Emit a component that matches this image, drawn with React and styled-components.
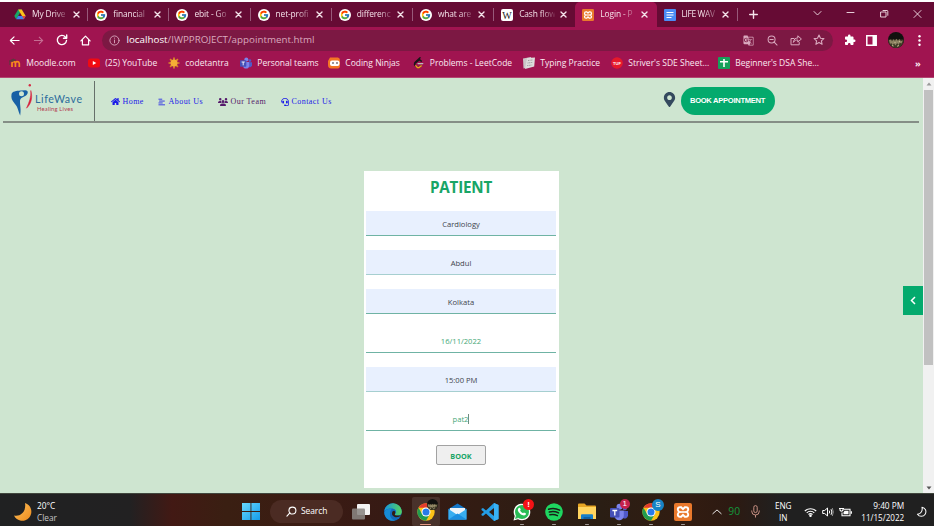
import React from "react";
import styled, { createGlobalStyle, css } from "styled-components";
import { FaHome, FaHeadset, FaMapMarkerAlt } from "react-icons/fa";
import { FaUsers } from "react-icons/fa6";
import { FcGoogle } from "react-icons/fc";
import { MdGTranslate, MdExtension } from "react-icons/md";

const ui = `"Open Sans", "Noto Sans", sans-serif`;

const Global = createGlobalStyle`
  * { box-sizing: border-box; }
  html, body { margin: 0; padding: 0; background: #fff; overflow: hidden; }
  svg { display: block; flex: none; }
`;

const Screen = styled.div`
  width: 934px;
  height: 526px;
  padding-top: 2px;
  display: flex;
  flex-direction: column;
  font-family: ${ui};
  overflow: hidden;
`;

const Text = styled.span`
  font-size: ${(p) => p.$size || 9}px;
  letter-spacing: ${(p) => p.$ls || 0}px;
  white-space: nowrap;
  line-height: 1.2;
`;

/* ---------- browser chrome ---------- */
const TabStrip = styled.div`
  height: 25px;
  flex: none;
  background: #660b34;
  display: flex;
  padding-left: 7px;
  color: #f5e3ea;
`;
const Tab = styled.div`
  width: 81.2px;
  height: 25px;
  padding: 0 0 0 7px;
  display: flex;
  align-items: center;
  position: relative;
  flex: none;
  ${(p) => p.$active && css`background: #a01450; border-radius: 5px 5px 0 0;`}
  &::after {
    content: "";
    position: absolute;
    right: 0;
    top: 6px;
    width: 1px;
    height: 13px;
    background: ${(p) => (p.$line ? "#98597a" : "transparent")};
  }
`;
const TabTitle = styled.div`
  width: 36px;
  margin-left: 6px;
  display: flex;
  mask-image: linear-gradient(90deg, #000 60%, rgba(0, 0, 0, 0.1) 100%);
`;
const TabClose = styled.div`
  margin-left: 4.5px;
`;
const StripControls = styled.div`
  flex: 1;
  display: grid;
  grid-template-columns: 32px 31px 33px 34px 33px 34px;
  align-items: center;
  justify-items: center;
`;
const Toolbar = styled.div`
  height: 26px;
  flex: none;
  background: #a01450;
  display: flex;
  align-items: center;
  color: #fff;
`;
const ToolSlot = styled.div`
  width: ${(p) => p.$w}px;
  display: flex;
  justify-content: center;
  flex: none;
`;
const Address = styled.div`
  width: 731px;
  height: 21px;
  margin-left: 8px;
  border-radius: 11px;
  background: #7c1843;
  display: flex;
  align-items: center;
  padding-left: 7px;
  color: #d9a9be;
  & b { font-weight: 400; color: #fff; }
`;
const Url = styled(Text)`
  width: 610.5px;
  margin-left: 6.5px;
`;
const Bookmarks = styled.div`
  height: 24.5px;
  flex: none;
  background: #a01450;
  border-bottom: 1px solid #b44672;
  padding: 0 0 3px 9px;
  display: flex;
  color: #fbe9f0;
`;
const Bookmark = styled.div`
  width: ${(p) => p.$w}px;
  display: flex;
  align-items: center;
  gap: 5.3px;
  flex: none;
`;

/* ---------- page ---------- */
const Viewport = styled.div`
  height: 415.5px;
  flex: none;
  display: flex;
  background: #cee5d0;
`;
const Page = styled.main`
  width: 923px;
  position: relative;
`;
const Header = styled.header`
  height: 45.5px;
  margin: 0 4px 0 3px;
  border-bottom: 2px solid #858e86;
  display: flex;
  align-items: center;
`;
const Brand = styled.div`
  width: 92px;
  height: 40px;
  border-right: 1.5px solid #66706a;
  padding-left: 7px;
  display: flex;
  align-items: center;
  align-self: flex-end;
`;
const BrandWords = styled.div`
  display: flex;
  flex-direction: column;
  gap: 1px;
  margin: 4px 0 0 2px;
  font-family: Lato, sans-serif;
  color: #2c6c9c;
  & em { font-style: normal; color: #b43c50; margin-left: 2px; }
`;
const Nav = styled.nav`
  width: 567px;
  display: flex;
  padding: 5px 0 0 15.5px;
`;
const NavLink = styled.a`
  width: ${(p) => p.$w}px;
  display: flex;
  align-items: center;
  gap: 3px;
  color: ${(p) => (p.$visited ? "#551a6b" : "#1a1ae8")};
  font-family: "Liberation Serif", serif;
`;
const BookNow = styled.button`
  width: 94px;
  height: 27.5px;
  margin: 3px 0 0 3.5px;
  border: 0;
  padding: 0;
  border-radius: 14px;
  background: #04aa6d;
  color: #fff;
  font: bold 7.6px "Liberation Sans", Arial, sans-serif;
  letter-spacing: -0.3px;
  white-space: nowrap;
`;
const Card = styled.form`
  width: 195.5px;
  height: 317px;
  margin: 47.5px 0 0 363.5px;
  padding: 0 3px 0 2.5px;
  background: #fff;
  display: flex;
  flex-direction: column;
  align-items: center;
`;
const Title = styled.h1`
  height: 40.5px;
  margin: 0;
  padding-top: 5px;
  font-size: 15.2px;
  line-height: 22px;
  letter-spacing: -0.2px;
  color: #18a566;
`;
const Field = styled.div`
  width: 100%;
  height: 25px;
  margin-bottom: 14px;
  padding-top: 2.5px;
  flex: none;
  display: flex;
  align-items: center;
  justify-content: center;
  background: ${(p) => (p.$filled ? "#e8f0fe" : "#fff")};
  color: ${(p) => (p.$filled ? "#41454c" : "#46a777")};
  border-bottom: 1px solid ${(p) => (p.$soft ? "#a6cfd0" : "#6fb3a4")};
`;
const Caret = styled.i`
  width: 1px;
  height: 10px;
  background: #6f8f80;
`;
const Submit = styled.button`
  width: 50px;
  height: 20px;
  border: 1px solid #a2a2a2;
  border-radius: 2px;
  background: #efefef;
  color: #18a566;
  font: bold 7.3px ${ui};
  padding: 1px 0 0;
`;
const Drawer = styled.div`
  position: absolute;
  right: 0;
  top: 208.5px;
  width: 20px;
  height: 29px;
  background: #04aa6d;
  display: grid;
  place-items: center;
`;
const Scrollbar = styled.div`
  width: 11px;
  background: #f1f1f1;
  display: flex;
  flex-direction: column;
  align-items: center;
  justify-content: space-between;
  padding: 4px 0 3px;
`;
const Thumb = styled.div`
  width: 9px;
  height: 275px;
  background: #c1c1c1;
  margin: 4.5px 0 auto;
`;

/* ---------- taskbar ---------- */
const Taskbar = styled.footer`
  height: 33px;
  flex: none;
  border-top: 1px solid #40463d;
  display: flex;
  align-items: center;
  padding-top: 3px;
  color: #fff;
  background: linear-gradient(90deg, #202122 0, #222122 130px, #421914 172px, #3a1f12 225px, #3b1c13 300px, #381a14 360px, #321c13 480px, #2a1e14 600px, #321c11 690px, #2c1a12 735px, #202020 780px, #202020 100%);
`;
const Weather = styled.div`
  width: 235px;
  padding-left: 13px;
  display: flex;
  align-items: center;
  gap: 5px;
`;
const Stack = styled.div`
  display: flex;
  flex-direction: column;
  align-items: ${(p) => p.$align || "flex-start"};
  gap: 2px;
  flex: none;
`;
const Muted = styled(Text)`
  color: #c6c6c6;
`;
const Battery = styled(Text)`
  color: #14973c;
`;
const Search = styled.div`
  width: 73px;
  height: 23px;
  margin: 0 2px 0 3px;
  border-radius: 12px;
  background: #4b2b23;
  display: flex;
  align-items: center;
  justify-content: center;
  gap: 4px;
`;
const TaskIcon = styled.div`
  width: 32.2px;
  height: 29px;
  flex: none;
  display: flex;
  align-items: center;
  justify-content: center;
  position: relative;
  &::before {
    content: "";
    position: absolute;
    z-index: 0;
    inset: 0 2px;
    border-radius: 2px;
    background: ${(p) => (p.$active ? "rgba(255,255,255,.1)" : "transparent")};
  }
  &::after {
    content: "";
    position: absolute;
    bottom: 1px;
    width: ${(p) => (p.$active ? 11 : 4)}px;
    height: 1.5px;
    border-radius: 1px;
    background: ${(p) => (p.$active ? "#e59a86" : p.$open ? "#a29b98" : "transparent")};
  }
  & > svg { position: relative; }
`;
const Badge = styled.span`
  position: absolute;
  left: 17px;
  top: 2px;
  width: ${(p) => p.$d || 11}px;
  height: ${(p) => p.$d || 11}px;
  border-radius: 50%;
  background: ${(p) => p.$c};
  color: #fff;
  font: ${(p) => (p.$bold ? "bold" : "normal")} 8px/1 "Liberation Sans", sans-serif;
  display: grid;
  place-items: center;
`;
const Tray = styled.div`
  flex: 1;
  margin-left: 12px;
  display: grid;
  grid-template-columns: 12px 22px 20px 36px 19px 15px 21px 53px 1fr;
  align-items: center;
  justify-items: center;
`;

/* ---------- drawings ---------- */
const Line = ({ d, s = 12, w = 1.2, vb = 12, children }) => (
  <svg width={s} height={s} viewBox={`0 0 ${vb} ${vb}`} fill="none" stroke="currentColor" strokeWidth={w} strokeLinecap="round" strokeLinejoin="round">
    <path d={d} />{children}
  </svg>
);
const Close = () => <Line s={7} vb={7} w={1.4} d="M1 1 6 6M6 1 1 6" />;
const Google = () => (
  <svg width="12" height="12" viewBox="0 0 12 12"><circle cx="6" cy="6" r="6" fill="#fff" /><g transform="translate(1 1)"><FcGoogle size={10} /></g></svg>
);
const Drive = () => (
  <svg width="12" height="11" viewBox="0 0 12 11"><path d="M4.2.5h3.6L4 7.2 2.2 10.3.3 7z" fill="#16a765" /><path d="M4.2.5h3.6L11.7 7H8z" fill="#fbc31a" /><path d="M4.1 7h7.6l-1.9 3.3H2.2z" fill="#3d82ee" /><path d="m8.1 7 1.7 3.3L11.7 7z" fill="#e94435" /></svg>
);
const Wiki = () => (
  <svg width="12" height="12" viewBox="0 0 12 12"><rect width="12" height="12" rx="2" fill="#fff" /><text x="6" y="9.5" textAnchor="middle" fontFamily="Liberation Serif" fontSize="10" fill="#222">W</text></svg>
);
const Xampp = ({ s = 12 }) => (
  <svg width={s} height={s} viewBox="0 0 18 18"><rect width="18" height="18" rx="2" fill="#e9792c" /><path d="M6 4.3h1.2L9 6.2l1.8-1.9H12q2.2 0 2.2 2.3Q14.2 8 12.6 9q1.6 1 1.6 2.5 0 2.2-2.2 2.2h-1.2L9 11.8l-1.8 1.9H6q-2.2 0-2.2-2.2Q3.8 10 5.4 9 3.8 8 3.8 6.6 3.8 4.3 6 4.3z" fill="none" stroke="#fff" strokeWidth="1.9" /><path d="M6 9h6" stroke="#fff" strokeWidth="1.6" /></svg>
);
const Docs = () => (
  <svg width="12" height="12" viewBox="0 0 12 12"><rect width="12" height="12" rx="1" fill="#4b8cf5" /><path d="M2.5 3.5h7M2.5 6h7M2.5 8.5h5" stroke="#fff" strokeWidth="1.2" /></svg>
);
const Moodle = () => (
  <svg width="12" height="12" viewBox="0 0 12 12" fill="none"><path d="M3 10V6.4q0-1.7 1.7-1.7T6.4 6.4V10M6.4 6.4q0-1.7 1.8-1.7T10.3 6.4V10" stroke="#f78a1d" strokeWidth="1.7" /><path d="m.3 4 4-2 2.4 1-3 1.4zM.7 4v4" stroke="#5d3a3c" strokeWidth=".8" fill="#5d3a3c" /></svg>
);
const Youtube = () => (
  <svg width="12" height="10" viewBox="0 0 12 10"><rect y=".5" width="12" height="9" rx="2.5" fill="#f00a12" /><path d="m4.8 3 3.5 2-3.5 2z" fill="#fff" /></svg>
);
const Sun = () => (
  <svg width="12" height="12" viewBox="0 0 12 12"><path d="M6 .5v11M.5 6h11M2.1 2.1l7.8 7.8M9.9 2.1 2.1 9.9" stroke="#d98a25" strokeWidth="1.7" /><circle cx="6" cy="6" r="3.5" fill="#f5ae35" /></svg>
);
const Teams = ({ s = 12 }) => (
  <svg width={s} height={s} viewBox="0 0 18 18"><circle cx="14.8" cy="5.4" r="2" fill="#5059c9" /><path d="M11.5 8H18v4.5a3.2 3.2 0 0 1-5 2.4z" fill="#5059c9" /><circle cx="9.5" cy="3.7" r="3" fill="#7b83eb" /><path d="M4.5 7.5h9.3v5.2a4.6 4.6 0 0 1-9.3 0z" fill="#7b83eb" /><rect y="5" width="9.5" height="9.5" rx="1" fill="#4550b8" /><path d="M2.4 7.5h4.8M4.8 7.5V12.5" stroke="#fff" strokeWidth="1.3" /></svg>
);
const Ninja = () => (
  <svg width="12" height="12" viewBox="0 0 12 12"><path d="M2 .5h8Q12 1 12 3.2v5.5q0 2.8-3 2.8H3Q0 11.3 0 8V4z" fill="#f37524" /><rect x="2" y="3.5" width="9.5" height="5.5" rx="2" fill="#fff" /><path d="M4 6h2M8 6h2" stroke="#402b32" /></svg>
);
const Leet = () => (
  <svg width="12" height="12" viewBox="0 0 12 12" fill="none" strokeLinecap="round" strokeWidth="1.5"><path d="M7 .8 2 5.5" stroke="#171717" /><path d="M8.3 4.1 6.5 2.7 2 6.2q-1 1 0 2l2 2.2q1 1 2.1 0l2-1.5" stroke="#171717" /><path d="m2.8 8.8 1.4 1.6q1 .8 2 0l2-1.5" stroke="#f39b21" /><path d="M5 6.6h4.8" stroke="#bbb" strokeWidth="1.2" /></svg>
);
const Typing = () => (
  <svg width="12" height="12" viewBox="0 0 12 12"><path d="M0 1.5 8 0l.5 9.5L.5 11.5z" fill="#c9c6c6" /><path d="m4 1 8-.6-.8 9.1L2 12z" fill="#dedcdc" /><path d="m5 3.5 5-.6M4.6 6l5-.6M4.2 8.6l5-.6" stroke="#999" strokeWidth="1" strokeDasharray="1 .6" /></svg>
);
const Tuf = () => (
  <svg width="12" height="12" viewBox="0 0 12 12"><circle cx="6" cy="6" r="5.8" fill="#e6192a" /><text x="6" y="7.5" textAnchor="middle" fontFamily="Liberation Sans" fontSize="4" fontWeight="bold" fill="#fff">TUF</text></svg>
);
const Sheets = () => (
  <svg width="12" height="12" viewBox="0 0 12 12"><rect width="12" height="12" rx="1" fill="#16a05b" /><path d="M6 2v8M2 4.8h8" stroke="#fff" strokeWidth="1.6" /></svg>
);
const Avatar = ({ s = 16 }) => (
  <svg width={s} height={s} viewBox="0 0 16 16"><circle cx="8" cy="8" r="8" fill="#11110e" /><path d="M.4 7.5h15.2Q16 12 12 15q-4 2-8 0Q0 12 .4 7.5z" fill="#3e3a26" /><path d="m1 8.2 2-.6 1 2 1.4-2.4L7 9l1.3-2.2L10 9l1.4-2 1.4 2.3 2-.8-1.3 3-1.8-.8-1 2.4-1.6-2-1.5 2.4L6 11.4l-1.5 1.8-.8-2-1.7.5z" fill="#8d8362" /><path d="m4 13.5 1.6.5M9 14.3l2-.8M6.5 10.5h1M11 9.6h1" stroke="#c9bd92" /></svg>
);
const Logo = () => (
  <svg width="23" height="36" viewBox="0 0 23 36"><path d="M1.5 11.5C2 8 6.5 8 10.5 7.5l5-.3c3 .2 3 3.5.2 5.5-2.5 1.8-5.6 1.8-5.7 5.3-.1 5 1.3 8 .2 14.5C8 28 8.2 24.3 4.6 20.5 1.7 17.2 1 14.5 1.5 11.5z" fill="#1760a5" /><circle cx="11.5" cy="10.8" r="2.5" fill="#cee5d0" /><path d="M20.8 7.5c1.9 7 .8 13-4.3 17.7 2.6-6 4.8-10.7 4.3-17.7z" fill="#d61f3b" stroke="#d61f3b" strokeWidth=".5" /><circle cx="19.8" cy="2.2" r="1.2" fill="#d52b43" /></svg>
);
const Lines = () => (
  <svg width="7.5" height="8" viewBox="0 0 8 8" fill="none" stroke="currentColor" strokeWidth="1" opacity=".85"><path d="M.5 1h4M1.2 3h6M.5 5h4.5M.5 7h7" /></svg>
);
const Chrome = () => (
  <svg width="18" height="18" viewBox="0 0 18 18"><circle cx="9" cy="9" r="8.7" fill="#fbc116" /><path d="M1.47 4.65A8.7 8.7 0 0 1 16.53 4.65H9z" fill="#e33b2e" /><path d="M1.47 4.65A8.7 8.7 0 0 0 9 17.7l3.8-6.5L9 9 5.2 11.2z" fill="#219c50" /><circle cx="9" cy="9" r="4.5" fill="#fff" /><circle cx="9" cy="9" r="3.5" fill="#287be8" /></svg>
);
const Edge = () => (
  <svg width="18" height="18" viewBox="0 0 18 18"><defs><linearGradient id="eg"><stop stopColor="#1696dc" /><stop offset="1" stopColor="#55d45e" /></linearGradient></defs><circle cx="9" cy="9" r="8.8" fill="#1269bb" /><path d="M.3 8A8.8 8.8 0 0 1 17.8 8.5c0 3-2.1 4-4.3 4-2 0-3.2-.7-2.2-1.7 2-2.5-.3-5.1-3-5.3C4.7 5.2 1.5 6.7.3 8z" fill="url(#eg)" /><path d="M8 10.2c.2-1.6 1-2.4 2.2-2.4 1.4 1 1.2 2.4.7 3.1-.6.9.7 1.7 3 1.7 1 0 2.5-.2 3.4-.7C15.7 13.6 13 14.7 10.8 13.9 9 13.3 7.8 11.8 8 10.2z" fill="#321c13" /><path d="M6 10.5c-.4 3.5 2.3 6.6 5.6 7-6 1.6-11.3-2.5-11.3-8C1 6.5 5 5.3 8.3 5.5 6.8 6.8 6.1 8.5 6 10.5z" fill="#178bd5" /></svg>
);
const Windows = () => (
  <svg width="18" height="17" viewBox="0 0 18 17"><defs><linearGradient id="wg" x2="1" y2="1"><stop stopColor="#68d8fc" /><stop offset="1" stopColor="#149be9" /></linearGradient></defs><path d="M0 0h8.5v8H0zM9.4 0H18v8H9.4zM0 9h8.5v8H0zM9.4 9H18v8H9.4z" fill="url(#wg)" /></svg>
);
const TaskView = () => (
  <svg width="18" height="17" viewBox="0 0 18 17"><rect x="5" y="1" width="13" height="11" rx="1" fill="#f4f3f3" /><rect x="0" y="5.5" width="13" height="11" rx="1" fill="#8a8582" fillOpacity=".88" /></svg>
);
const Mail = () => (
  <svg width="19" height="17" viewBox="0 0 19 17"><path d="M.5 6 9.5.5l9 5.5v10.5H.5z" fill="#1677c8" /><path d="M2 5h15v7H2z" fill="#eef4fa" /><path d="m.5 6 9 6 9-6v10.5H.5z" fill="#38aef1" /><path d="m.5 16.5 9-6 9 6z" fill="#1b8fe1" /></svg>
);
const Code = () => (
  <svg width="18" height="18" viewBox="0 0 18 18"><path d="m13 0 4.5 2v14L13 18 5 10.5 2 13l-1.5-.8V11L3 9 .5 7V5.8L2 5l3 2.5zM13 5 8 9l5 4z" fill="#249ee6" fillRule="evenodd" /><path d="m13 0 4.5 2v14L13 18z" fill="#39b1f4" /></svg>
);
const WhatsApp = () => (
  <svg width="18" height="18" viewBox="0 0 18 18"><path d="M.5 17.5 1.7 13A8.3 8.3 0 1 1 5 16.3z" fill="#fff" /><circle cx="9" cy="9" r="7" fill="#29bd56" /><path d="m2 16 1-3.4 2.5 2.5z" fill="#29bd56" /><path d="M5.8 5.1c.6-.6 1.2-.5 1.5.3l.5 1.1-.7 1c.8 1.5 1.8 2.3 3 2.8l.8-.9 1.8.9c.5.2.2 1.2-.4 1.7-.8.7-1.9.6-3.3 0-2-.8-3.5-2.8-4-4.2-.4-1.1 0-2 .8-2.7z" fill="#fff" /></svg>
);
const Spotify = () => (
  <svg width="18" height="18" viewBox="0 0 18 18"><circle cx="9" cy="9" r="8.8" fill="#1ed760" /><path d="M3.6 6.2c4-1.1 7.8-.7 11 1M4.3 9c3.4-.9 6.5-.5 9.2.9M4.9 11.8c2.8-.7 5.3-.3 7.5.8" fill="none" stroke="#182018" strokeWidth="1.5" strokeLinecap="round" /></svg>
);
const Explorer = () => (
  <svg width="18" height="17" viewBox="0 0 18 17"><path d="M0 1.5Q0 .5 1 .5h5.5l2 2H17q1 0 1 1v12H0z" fill="#e7a624" /><path d="M0 4h18v12H0z" fill="#ffd55f" /><path d="M3 16v-3.7q0-1 1-1h10q1 0 1 1V16z" fill="#167fc9" /><path d="M5.5 16v-2h7v2z" fill="#0e60a2" /></svg>
);
const Arrow = ({ down }) => (
  <svg width="6" height="4" viewBox="0 0 6 4"><path d={down ? "M.5.5h5L3 3.5z" : "M.5 3.5h5L3 .5z"} fill={down ? "#555" : "#999"} /></svg>
);

const tabs = [
  [<Drive />, "My Drive"], [<Google />, "financial"], [<Google />, "ebit - Go"], [<Google />, "net-profi"],
  [<Google />, "differenc"], [<Google />, "what are"], [<Wiki />, "Cash flow"], [<Xampp />, "Login - P"], [<Docs />, "LIFE WAV", -0.35],
];
const marks = [
  [<Moodle />, "Moodle.com", 79], [<Youtube />, "(25) YouTube", 80], [<Sun />, "codetantra", 72],
  [<Teams />, "Personal teams", 88], [<Ninja />, "Coding Ninjas", 84.5], [<Leet />, "Problems - LeetCode", 110.5],
  [<Typing />, "Typing Practice", 88], [<Tuf />, "Striver's SDE Sheet...", 107], [<Sheets />, "Beginner's DSA She...", 197],
];
const fields = [
  ["Cardiology", true], ["Abdul", true, true], ["Kolkata", true], ["16/11/2022"], ["15:00 PM", true, true], ["pat2"],
];

export default function App() {
  return (
    <Screen>
      <Global />
      <TabStrip>
        {tabs.map(([icon, title, spacing = -0.12], i) => (
          <Tab key={title} $active={i === 7} $line={i < 6 || i === 8}>
            {icon}
            <TabTitle><Text $size={8.4} $ls={spacing}>{title}</Text></TabTitle>
            <TabClose><Close /></TabClose>
          </Tab>
        ))}
        <StripControls>
          <Line s={9} vb={9} w={1.4} d="M4.5.7v7.6M.7 4.5h7.6" />
          <span />
          <Line s={9} vb={9} w={0.9} d="M1 1.5 4.5 5 8 1.5" />
          <Line s={9} vb={9} w={0.9} d="M1 2.5h7" />
          <Line s={9} vb={9} w={0.9} d="M1 2h5v5H1zM3 .5h4q.8 0 .8.8v4" />
          <Line s={9} vb={9} w={0.9} d="m1 .5 7 7M8 .5l-7 7" />
        </StripControls>
      </TabStrip>

      <Toolbar>
        <ToolSlot $w={29}><Line s={11} w={1.3} d="M11 6H1.5M5.5 2 1.5 6l4 4" /></ToolSlot>
        <ToolSlot $w={18}><svg width="11" height="11" viewBox="0 0 12 12" fill="none" stroke="#c56d92" strokeWidth="1.2"><path d="M1 6h9.5M6.5 2l4 4-4 4" /></svg></ToolSlot>
        <ToolSlot $w={29}><Line s={12} w={1.4} d="M10.5 6.5A4.6 4.6 0 1 1 9.4 3L10.6 4.2M10.7 1v3.3H7.5" /></ToolSlot>
        <ToolSlot $w={18}><Line s={11} w={1.3} d="M1 6.5 6 1.3l5 5.2M2.6 5.2v5.5h6.8V5.2" /></ToolSlot>
        <Address>
          <Line s={11} w={1} d="M6 5.5v3M6 3.3v.2"><circle cx="6" cy="6" r="5" /></Line>
          <Url $size={9.8}><b>localhost</b>/IWPPROJECT/appointment.html</Url>
          <ToolSlot $w={23}><MdGTranslate size={11} /></ToolSlot>
          <ToolSlot $w={24}><Line s={11} w={1.1} d="M7.6 7.6 11 11M3.2 5h3.6"><circle cx="5" cy="5" r="3.8" /></Line></ToolSlot>
          <ToolSlot $w={23}><Line s={12} w={1} d="M4 4.5H1v6.3h8.2V8.5M3.5 8c.3-3 2-4 4.3-4V1.8L11.4 5 7.8 8V6C6 6 4.5 6.3 3.5 8z" /></ToolSlot>
          <ToolSlot $w={24}><Line s={12} w={1.1} d="m6 1.1 1.5 3.1 3.4.4-2.5 2.3.7 3.4L6 8.6l-3.1 1.7.7-3.4-2.5-2.3 3.4-.4z" /></ToolSlot>
        </Address>
        <ToolSlot $w={33}><MdExtension size={12} /></ToolSlot>
        <ToolSlot $w={11}><svg width="11" height="11" viewBox="0 0 11 11"><path d="M.8.8h9.4v9.4H.8z" fill="none" stroke="#fff" strokeWidth="1.5" /><path d="M6.5 1H10v9H6.5z" fill="#fff" /></svg></ToolSlot>
        <ToolSlot $w={37}><Avatar /></ToolSlot>
        <ToolSlot $w={10}><svg width="3" height="11" viewBox="0 0 3 11" fill="#fff"><circle cx="1.5" cy="1.3" r="1.2" /><circle cx="1.5" cy="5.5" r="1.2" /><circle cx="1.5" cy="9.7" r="1.2" /></svg></ToolSlot>
      </Toolbar>

      <Bookmarks>
        {marks.map(([icon, title, w]) => (
          <Bookmark key={title} $w={w}>{icon}<Text $size={8.5}>{title}</Text></Bookmark>
        ))}
        <Bookmark $w={16}><Text $size={9.5}><b>»</b></Text></Bookmark>
      </Bookmarks>

      <Viewport>
        <Page>
          <Header>
            <Brand>
              <Logo />
              <BrandWords><Text $size={10.6} $ls={0.6}>LifeWave</Text><Text as="em" $size={5.8} $ls={0.2}>Healing Lives</Text></BrandWords>
            </Brand>
            <Nav>
              <NavLink $w={47.5}><FaHome size={9} /><Text $size={8} $ls={0.45}>Home</Text></NavLink>
              <NavLink $w={59.5}><Lines /><Text $size={8} $ls={0.45}>About Us</Text></NavLink>
              <NavLink $w={63} $visited><FaUsers size={10} /><Text $size={8} $ls={0.45}>Our Team</Text></NavLink>
              <NavLink $w={60}><FaHeadset size={8} /><Text $size={8} $ls={0.45}>Contact Us</Text></NavLink>
            </Nav>
            <FaMapMarkerAlt size={15} color="#34495e" />
            <BookNow type="button">BOOK APPOINTMENT</BookNow>
          </Header>
          <Card>
            <Title>PATIENT</Title>
            {fields.map(([value, filled, soft]) => (
              <Field key={value} $filled={filled} $soft={soft}>
                <Text $size={7.6}>{value}</Text>{value === "pat2" && <Caret />}
              </Field>
            ))}
            <Submit type="button">BOOK</Submit>
          </Card>
          <Drawer><svg width="6" height="9" viewBox="0 0 6 9"><path d="M5 1 1.5 4.5 5 8" fill="none" stroke="#fff" strokeWidth="1.5" /></svg></Drawer>
        </Page>
        <Scrollbar><Arrow /><Thumb /><Arrow down /></Scrollbar>
      </Viewport>

      <Taskbar>
        <Weather>
          <svg width="19" height="19" viewBox="0 0 19 19"><defs><linearGradient id="mg" x2="1" y2="1"><stop stopColor="#ffc25c" /><stop offset="1" stopColor="#ec8b1d" /></linearGradient></defs><path d="M12 1a9.1 9.1 0 1 1-11 12.5C8 15 13.5 9 12 1z" fill="url(#mg)" /></svg>
          <Stack><Text $size={8.3}>20°C</Text><Muted $size={8.3}>Clear</Muted></Stack>
        </Weather>
        <TaskIcon><Windows /></TaskIcon>
        <Search><Line s={11} w={1.2} d="M4.2 7.5 1 11"><circle cx="7" cy="5" r="3.8" /></Line><Text $size={8.5} $ls={-0.1}>Search</Text></Search>
        <TaskIcon><TaskView /></TaskIcon>
        <TaskIcon><Edge /></TaskIcon>
        <TaskIcon $active><Chrome /><Badge $c="transparent"><Avatar s={11} /></Badge></TaskIcon>
        <TaskIcon><Mail /></TaskIcon>
        <TaskIcon><Code /></TaskIcon>
        <TaskIcon $open><WhatsApp /><Badge $c="#f51215" $bold>!</Badge></TaskIcon>
        <TaskIcon $open><Spotify /></TaskIcon>
        <TaskIcon $open><Explorer /></TaskIcon>
        <TaskIcon $open><Teams s={18} /><Badge $c="#c4224d" $d={10}>1</Badge></TaskIcon>
        <TaskIcon $open><Chrome /><Badge $c="#1783c5" $d={12}>S</Badge></TaskIcon>
        <TaskIcon $open><Xampp s={18} /></TaskIcon>
        <Tray>
          <Line s={10} w={1.1} d="M1 8 6 3.5 11 8" />
          <Battery $size={10.3}>90</Battery>
          <svg width="9" height="13" viewBox="0 0 9 13" fill="none" stroke="#c99184"><rect x="2.8" y=".6" width="3.4" height="7" rx="1.7" /><path d="M.7 5.5v.7a3.8 3.8 0 0 0 7.6 0v-.7M4.5 10v2.5" /></svg>
          <Stack $align="center"><Text $size={8.2}>ENG</Text><Text $size={8.2}>IN</Text></Stack>
          <svg width="13" height="10" viewBox="0 0 13 10" fill="none" stroke="#fff" strokeWidth="1.1"><path d="M.8 4a8.2 8.2 0 0 1 11.4 0M2.7 5.8a5.5 5.5 0 0 1 7.6 0M4.5 7.5a3 3 0 0 1 4 0" /><circle cx="6.5" cy="8.7" r=".7" fill="#fff" /></svg>
          <svg width="12" height="10" viewBox="0 0 12 10" fill="none" stroke="#fff"><path d="M.7 3.5h2L5.5 1v8L2.7 6.5h-2zM7.2 3.5q1 1.5 0 3M9 2.2q1.8 2.8 0 5.6" /><path d="M10.3 1q2 4 0 8" opacity=".5" /></svg>
          <svg width="13" height="10" viewBox="0 0 13 10" fill="none" stroke="#fff" strokeWidth="1.1"><path d="M4.5 2.2H11v6.5H3V5.5M12.4 4.2v2.5" /><path d="M1 1v2.2q1.5 2 3 0V1M0 1.5h5" /><path d="M5.5 3.8h4v3.4H4.5V5.5z" fill="#fff" stroke="none" /></svg>
          <Stack $align="flex-end"><Text $size={8.3}>9:40 PM</Text><Text $size={8.1}>11/15/2022</Text></Stack>
          <Line s={11} w={1.1} d="M6.5 1.3A5 5 0 1 1 1.6 9C5.3 8.8 7.5 5.5 6.5 1.3z" />
        </Tray>
      </Taskbar>
    </Screen>
  );
}
